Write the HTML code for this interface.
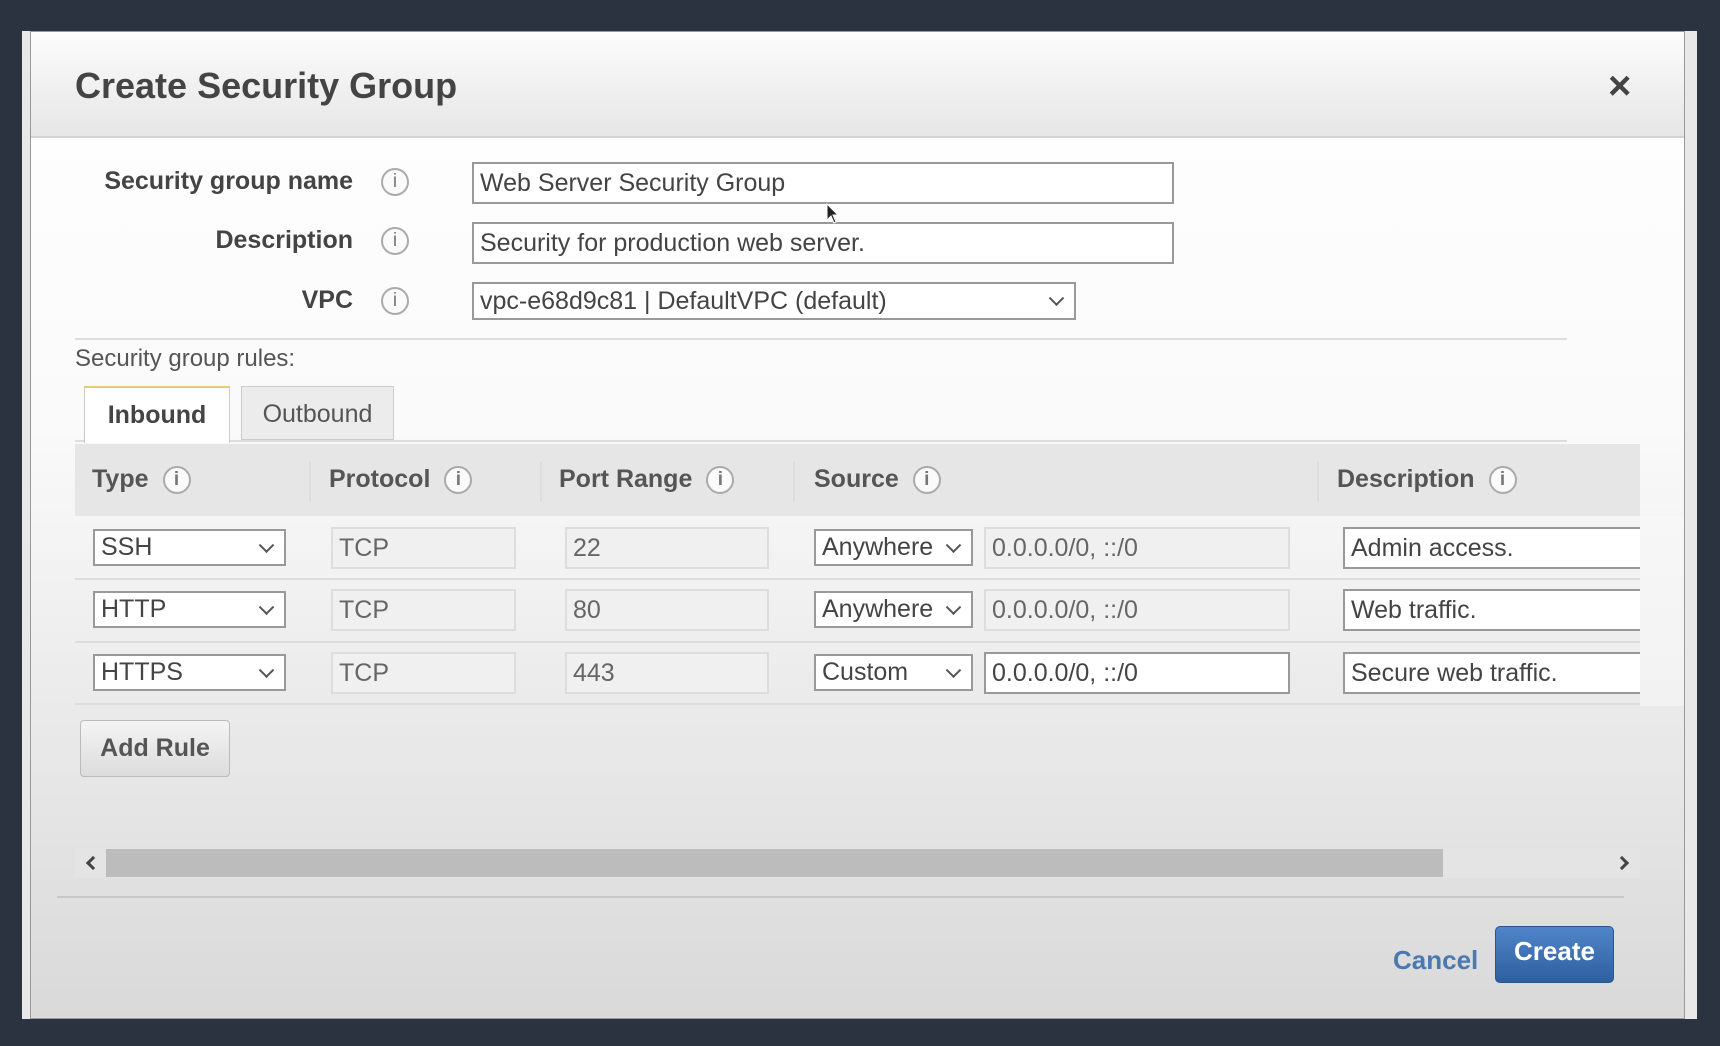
<!DOCTYPE html>
<html><head><meta charset="utf-8"><style>
*{box-sizing:border-box;margin:0;padding:0}
body{width:1720px;height:1046px;background:#2b3240;position:relative;overflow:hidden;font-family:"Liberation Sans",Arial,sans-serif;color:#444}
.a{position:absolute}
.dlg{left:30px;top:31px;width:1655px;height:988px;background:linear-gradient(#fff 0%,#fafafa 40%,#d9d9d9 100%);border:1px solid #999}
.hdr{left:0;top:0;width:100%;height:106px;background:linear-gradient(#fcfcfc,#e6e6e6);border-bottom:2px solid #d4d4d4}
.lbl{font-weight:bold;font-size:25px;color:#444;text-align:right;width:300px}
.info{width:28px;height:28px;border:2px solid #aaa;border-radius:50%;font-size:19px;color:#777;text-align:center;line-height:24px;font-family:"Liberation Sans",sans-serif;background:#fafafa}
.inp{border:2px solid #999;background:#fff;font-size:25px;color:#444;padding-left:6px;display:flex;align-items:center;white-space:nowrap;overflow:hidden}
.gr{background:#f0f0f0;border:2px solid #ddd;color:#666}
.sel::after{content:"";position:absolute;right:12px;top:50%;width:9px;height:9px;border-right:2px solid #555;border-bottom:2px solid #555;transform:translateY(-75%) rotate(45deg)}
.th{font-weight:bold;font-size:25px;color:#555;top:465px;display:flex;align-items:center;gap:14px}
.sep{width:2px;height:40px;background:#ddd;top:462px}
.hl{height:2px;background:#ddd}
.arr{width:10px;height:10px;border-right:3px solid #444;border-bottom:3px solid #444;top:858px}
</style></head><body>
<div class="a" style="left:22px;top:31px;width:10px;height:988px;background:#e8e8e8"></div>
<div class="a" style="left:1684px;top:31px;width:13px;height:988px;background:#e8e8e8"></div>
<div class="a dlg">
 <div class="a hdr"></div>
</div>
<div class="a" style="left:75px;top:65px;font-size:36px;font-weight:bold;color:#444">Create Security Group</div>
<div class="a" style="left:1608px;top:64px;font-size:40px;font-weight:bold;color:#444">×</div>

<div class="a lbl" style="left:53px;top:167px">Security group name</div>
<div class="a lbl" style="left:53px;top:226px">Description</div>
<div class="a lbl" style="left:53px;top:286px">VPC</div>
<div class="a info" style="left:381px;top:168px">i</div>
<div class="a info" style="left:381px;top:227px">i</div>
<div class="a info" style="left:381px;top:287px">i</div>
<div class="a inp" style="left:472px;top:162px;width:702px;height:42px">Web Server Security Group</div>
<div class="a inp" style="left:472px;top:222px;width:702px;height:42px">Security for production web server.</div>
<div class="a inp sel" style="left:472px;top:282px;width:604px;height:38px">vpc-e68d9c81 | DefaultVPC (default)</div>
<svg class="a" style="left:826px;top:203px" width="14" height="22"><path d="M1 1 L1 17 L5 13 L8 20 L10 19 L7 12 L12 12 Z" fill="#222" stroke="#fff" stroke-width="1"/></svg>

<div class="a hl" style="left:75px;top:338px;width:1492px"></div>
<div class="a" style="left:75px;top:345px;font-size:24px;color:#555">Security group rules:</div>
<div class="a hl" style="left:75px;top:440px;width:1492px"></div>
<div class="a" style="left:84px;top:386px;width:146px;height:57px;background:#fff;border:1px solid #ccc;border-top:2px solid #e8c97a;border-bottom:none;font-size:25px;font-weight:bold;color:#444;text-align:center;line-height:54px">Inbound</div>
<div class="a" style="left:241px;top:386px;width:153px;height:54px;background:#ececec;border:1px solid #ccc;font-size:25px;color:#555;text-align:center;line-height:54px">Outbound</div>

<div class="a" style="left:75px;top:444px;width:1565px;height:72px;background:#e6e6e6"></div>
<div class="a th" style="left:92px">Type <span class="info" style="display:inline-block;position:static">i</span></div>
<div class="a th" style="left:329px">Protocol <span class="info" style="display:inline-block;position:static">i</span></div>
<div class="a th" style="left:559px">Port Range <span class="info" style="display:inline-block;position:static">i</span></div>
<div class="a th" style="left:814px">Source <span class="info" style="display:inline-block;position:static">i</span></div>
<div class="a th" style="left:1337px">Description <span class="info" style="display:inline-block;position:static">i</span></div>
<div class="a sep" style="left:309px"></div><div class="a sep" style="left:540px"></div><div class="a sep" style="left:793px"></div><div class="a sep" style="left:1317px"></div>

<div class="a inp sel" style="left:93px;top:529px;width:193px;height:37px">SSH</div>
<div class="a inp gr" style="left:331px;top:527px;width:185px;height:42px">TCP</div>
<div class="a inp gr" style="left:565px;top:527px;width:204px;height:42px">22</div>
<div class="a inp sel" style="left:814px;top:529px;width:159px;height:37px">Anywhere</div>
<div class="a inp gr" style="left:984px;top:527px;width:306px;height:42px">0.0.0.0/0, ::/0</div>
<div class="a inp" style="left:1343px;top:527px;width:300px;height:42px">Admin access.</div>
<div class="a hl" style="left:75px;top:578px;width:1565px"></div>

<div class="a inp sel" style="left:93px;top:591px;width:193px;height:37px">HTTP</div>
<div class="a inp gr" style="left:331px;top:589px;width:185px;height:42px">TCP</div>
<div class="a inp gr" style="left:565px;top:589px;width:204px;height:42px">80</div>
<div class="a inp sel" style="left:814px;top:591px;width:159px;height:37px">Anywhere</div>
<div class="a inp gr" style="left:984px;top:589px;width:306px;height:42px">0.0.0.0/0, ::/0</div>
<div class="a inp" style="left:1343px;top:589px;width:300px;height:42px">Web traffic.</div>
<div class="a hl" style="left:75px;top:641px;width:1565px"></div>

<div class="a inp sel" style="left:93px;top:654px;width:193px;height:37px">HTTPS</div>
<div class="a inp gr" style="left:331px;top:652px;width:185px;height:42px">TCP</div>
<div class="a inp gr" style="left:565px;top:652px;width:204px;height:42px">443</div>
<div class="a inp sel" style="left:814px;top:654px;width:159px;height:37px">Custom</div>
<div class="a inp" style="left:984px;top:652px;width:306px;height:42px">0.0.0.0/0, ::/0</div>
<div class="a inp" style="left:1343px;top:652px;width:300px;height:42px">Secure web traffic.</div>
<div class="a hl" style="left:75px;top:703px;width:1565px"></div>
<div class="a" style="left:1640px;top:516px;width:44px;height:190px;background:linear-gradient(#f7f7f7,#f2f2f2)"></div>

<div class="a" style="left:80px;top:720px;width:150px;height:57px;background:linear-gradient(#f4f4f4,#dcdcdc);border:1px solid #bbb;border-radius:4px;font-size:25px;font-weight:bold;color:#555;text-align:center;line-height:55px">Add Rule</div>

<div class="a" style="left:75px;top:848px;width:1565px;height:30px;background:#e4e4e4"></div>
<div class="a" style="left:106px;top:849px;width:1337px;height:28px;background:#bcbcbc"></div>
<div class="a arr" style="left:88px;transform:rotate(135deg)"></div>
<div class="a arr" style="left:1617px;transform:rotate(-45deg)"></div>

<div class="a hl" style="left:57px;top:896px;width:1567px;background:#c8c8c8"></div>
<div class="a" style="left:1393px;top:945px;font-size:26px;font-weight:bold;color:#4a78b0">Cancel</div>
<div class="a" style="left:1495px;top:926px;width:119px;height:57px;background:linear-gradient(#4f86c9,#2f5f9f);border:1px solid #2b5590;border-radius:5px;font-size:26px;font-weight:bold;color:#fff;text-align:center;line-height:48px">Create</div>
</body></html>
